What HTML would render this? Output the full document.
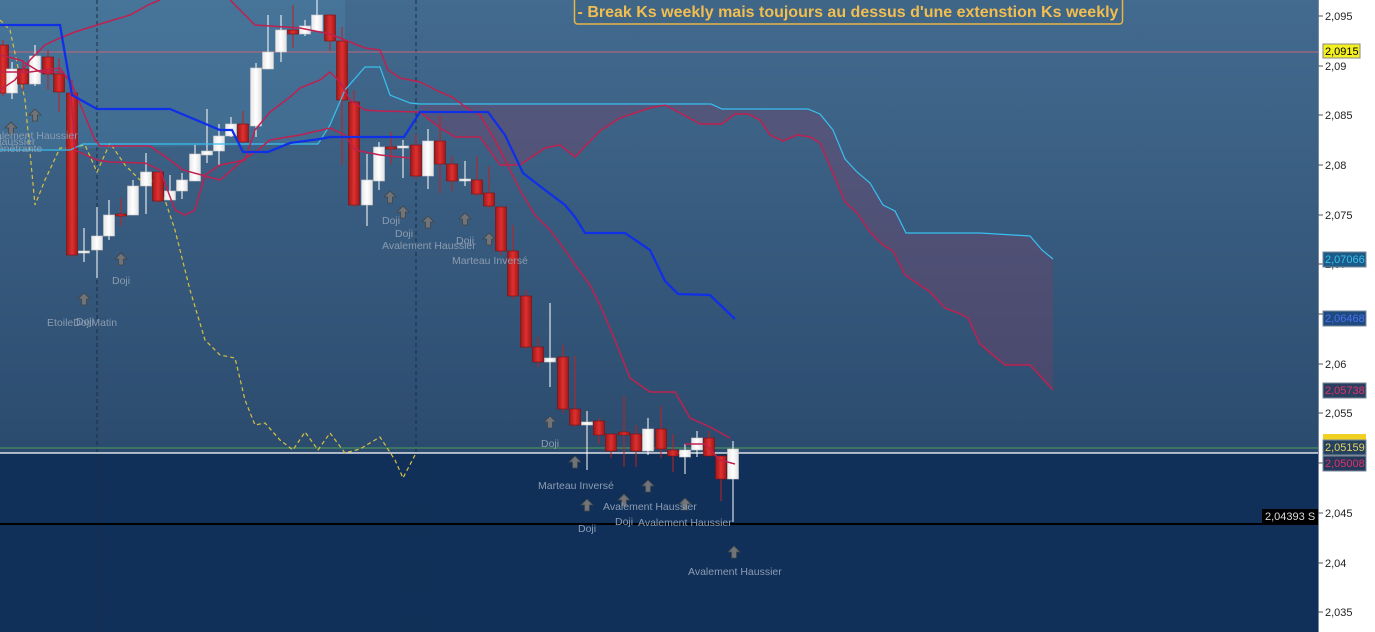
<!DOCTYPE html>
<html><head><meta charset="utf-8"><style>
html,body{margin:0;padding:0;width:1375px;height:632px;overflow:hidden;background:#fff}
svg{display:block}
text{font-family:"Liberation Sans",sans-serif}
</style></head><body>
<svg id="s" width="1375" height="632" viewBox="0 0 1375 632">
<defs>
<linearGradient id="bg" x1="0" y1="0" x2="0" y2="1"><stop offset="0" stop-color="#436b8f"/><stop offset="1" stop-color="#2b4b6e"/></linearGradient>
<linearGradient id="rb" x1="0" y1="0" x2="1" y2="0"><stop offset="0" stop-color="#a01818"/><stop offset="0.5" stop-color="#e03030"/><stop offset="1" stop-color="#a01818"/></linearGradient>
<linearGradient id="wb" x1="0" y1="0" x2="1" y2="0"><stop offset="0" stop-color="#e8e8e8"/><stop offset="0.5" stop-color="#ffffff"/><stop offset="1" stop-color="#e0e0e0"/></linearGradient>
<symbol id="ar" viewBox="0 0 14 14"><path d="M7 1 L13 7 L9.5 7 L9.5 13 L4.5 13 L4.5 7 L1 7 Z" fill="#707478" stroke="#404448" stroke-width="0.8"/></symbol>
</defs>
<rect x="0" y="0" width="1318" height="453" fill="url(#bg)"/>
<rect x="0" y="453" width="1318" height="179" fill="#10305a"/>
<rect x="1318" y="0" width="57" height="632" fill="#ffffff"/>
<polygon points="0,0 345,0 345,90 330,125 318,144 0,150" fill="rgba(100,180,220,0.14)"/>
<polygon points="420,104 700,104 711,104 722,109 808,109 820,114 833,130 845,159 857,172 870,183 883,205 895,211 906,233 980,233 1030,236 1042,250 1053,259 1053,390 1030,365 1005,365 993,355 980,344 968,318 958,313 945,308 930,292 905,275 893,251 883,245 870,232 857,213 845,202 835,178 820,143 810,137 797,135 783,141 770,135 760,120 748,114 735,114 722,124 700,124 680,113 665,105 650,108 620,118 600,131 575,157 560,145 545,148 520,165 500,165 480,137 455,137 440,128 420,112" fill="rgba(130,60,100,0.33)"/>
<line x1="97" y1="0" x2="97" y2="632" stroke="#1d2d40" stroke-dasharray="4,3"/>
<line x1="416" y1="0" x2="416" y2="632" stroke="#1d2d40" stroke-dasharray="4,3"/>
<line x1="0" y1="52" x2="1318" y2="52" stroke="#c06878" stroke-width="1"/>
<line x1="0" y1="448" x2="1318" y2="448" stroke="#3d7565" stroke-width="2"/>
<line x1="0" y1="453" x2="1318" y2="453" stroke="#ffffff" stroke-width="1.2"/>
<line x1="0" y1="524" x2="1318" y2="524" stroke="#000" stroke-width="2"/>
<polyline fill="none" stroke="#d8c040" stroke-width="1.2" stroke-dasharray="4,3" points="0,20 10,30 25,100 35,205 45,180 60,148 70,148 85,145 97,172 110,143 125,165 140,180 150,178 165,200 175,230 190,290 205,340 220,355 235,358 245,400 255,425 265,423 280,440 293,450 305,432 318,450 330,433 345,453 360,449 380,437 395,460 403,478 415,455"/>
<g id="cndl"></g>
<polyline fill="none" stroke="#38c0f0" stroke-width="1.2" points="0,150 70,150 83,144 318,144 330,125 345,90 365,67 380,67 390,95 410,103 420,104 700,104 711,104 722,109 808,109 820,114 833,130 845,159 857,172 870,183 883,205 895,211 906,233 980,233 1030,236 1042,250 1053,259"/>
<polyline fill="none" stroke="#c02050" stroke-width="1.5" points="420,112 440,128 455,137 480,137 500,165 520,165 545,148 560,145 575,157 600,131 620,118 650,108 665,105 680,113 700,124 722,124 735,114 748,114 760,120 770,135 783,141 797,135 810,137 820,143 835,178 845,202 857,213 870,232 883,245 893,251 905,275 930,292 945,308 958,313 968,318 980,344 993,355 1005,365 1030,365 1053,390"/>
<polyline fill="none" stroke="#c02050" stroke-width="1.5" points="0,90 15,80 30,60 45,45 60,38 75,32 97,25 110,21 130,15 150,4 160,0"/>
<polyline fill="none" stroke="#c02050" stroke-width="1.5" points="230,0 255,25 300,28 330,34 345,40 365,48 380,50 388,70 400,78 420,82 440,92 452,97 470,110 480,115 495,140 505,160 520,190 535,215 550,230 565,250 575,265 590,285 600,305 615,340 630,378 650,392 675,392 690,418 710,427 730,438"/>
<polyline fill="none" stroke="#c02050" stroke-width="1.5" points="0,72 30,72 60,68 70,82 75,150 97,160 110,162 145,163 160,170 175,210 185,215 195,210 205,175 220,165 245,160 255,130 270,112 290,97 300,88 320,80 330,72 340,82 350,100 365,110 380,111 420,112"/>
<polyline fill="none" stroke="#c02050" stroke-width="1.5" points="0,55 20,60 40,72 62,72 70,80 95,140 100,146 150,146 170,160 183,170 220,180 243,160 258,150 270,140 300,135 330,128 345,135 355,150 380,155 410,158"/>
<polyline fill="none" stroke="#c02050" stroke-width="1.5" points="685,444 705,444 720,460 735,464"/>
<polyline fill="none" stroke="#1030e8" stroke-width="2.3" points="0,25 60,25 72,95 97,109 170,109 220,130 232,130 243,152 268,152 290,143 320,139 330,137 404,137 420,112 488,112 505,135 523,173 545,190 565,205 575,217 585,233 625,233 650,250 665,281 678,294 710,295 735,319"/>
<rect x="574.5" y="-3" width="548" height="27" rx="3" fill="#3f6587" stroke="#e8b448" stroke-width="1.5"/>
<text x="848" y="17" text-anchor="middle" font-size="16" font-weight="bold" fill="#f3be50">- Break Ks weekly mais toujours au dessus d'une extenstion Ks weekly</text>
<g>
<use href="#ar" x="4" y="121" width="14" height="14"/><use href="#ar" x="28" y="108" width="14" height="14"/>
<use href="#ar" x="77" y="292" width="14" height="14"/><use href="#ar" x="114" y="252" width="14" height="14"/>
<use href="#ar" x="383" y="190" width="14" height="14"/><use href="#ar" x="396" y="205" width="14" height="14"/>
<use href="#ar" x="421" y="215" width="14" height="14"/><use href="#ar" x="458" y="212" width="14" height="14"/>
<use href="#ar" x="482" y="232" width="14" height="14"/><use href="#ar" x="543" y="415" width="14" height="14"/>
<use href="#ar" x="568" y="455" width="14" height="14"/><use href="#ar" x="580" y="498" width="14" height="14"/>
<use href="#ar" x="617" y="493" width="14" height="14"/><use href="#ar" x="641" y="479" width="14" height="14"/>
<use href="#ar" x="678" y="497" width="14" height="14"/><use href="#ar" x="727" y="545" width="14" height="14"/>
</g>
<g font-size="10.5" fill="#8c9cb0">
<text x="-4" y="139">alement Haussier</text><text x="-6" y="145">Haussier</text><text x="-8" y="152">pénétrante</text>
<text x="112" y="284">Doji</text>
<text x="47" y="326">EtoileDojiMatin</text><text x="76" y="325">Doji</text>
<text x="382" y="224">Doji</text><text x="395" y="237">Doji</text>
<text x="382" y="249">Avalement Haussier</text><text x="456" y="244">Doji</text>
<text x="452" y="264">Marteau Inversé</text>
<text x="541" y="447">Doji</text><text x="538" y="489">Marteau Inversé</text>
<text x="603" y="510">Avalement Haussier</text><text x="578" y="532">Doji</text>
<text x="615" y="525">Doji</text><text x="638" y="526">Avalement Haussier</text>
<text x="688" y="575">Avalement Haussier</text>
</g>
<line x1="1318.5" y1="0" x2="1318.5" y2="632" stroke="#7a8a9a"/>
<g font-size="11" fill="#222" id="ax"></g>
<rect x="1323" y="44" width="37" height="14" fill="#f4f020" stroke="#888"/><text x="1325" y="55" font-size="11" fill="#000">2,0915</text>
<rect x="1323" y="252" width="43" height="15" fill="#1c5a87" stroke="#7a8a9a"/><text x="1325" y="263" font-size="11" fill="#38c0f0">2,07066</text>
<rect x="1323" y="311" width="43" height="15" fill="#1f4a80" stroke="#7a8a9a"/><text x="1325" y="322" font-size="11" fill="#4a70f0">2,06468</text>
<rect x="1323" y="383" width="43" height="15" fill="#2a3f5f" stroke="#7a8a9a"/><text x="1325" y="394" font-size="11" fill="#e0306a">2,05738</text>
<rect x="1323" y="434" width="43" height="8" fill="#f0d020"/>
<rect x="1323" y="440" width="43" height="15" fill="#24425f" stroke="#7a8a9a"/><text x="1325" y="451" font-size="11" fill="#e8d060">2,05159</text>
<rect x="1323" y="456" width="43" height="15" fill="#24385a" stroke="#7a8a9a"/><text x="1325" y="467" font-size="11" fill="#e0306a">2,05008</text>
<rect x="1262" y="509" width="56" height="14" fill="#000"/><text x="1265" y="520" font-size="11" fill="#ddd">2,04393 S</text>
</svg>
<script>
var C=[[3,'r',45,93,40,96],[12,'w',69,93,62,99],[23,'r',69,84,60,90],[35,'w',56,84,45,86],[48,'r',57,74,50,90],[59,'r',74,92,58,112],[72,'r',93,255,80,257],[84,'w',251,253,228,262],[97,'w',236,250,207,278],[109,'w',215,236,200,240],[121,'r',214,216,198,226],[133,'w',186,215,180,214],[146,'w',172,186,153,214],[158,'r',172,201,172,203],[170,'w',191,200,175,200],[182,'w',180,191,173,199],[195,'w',154,181,145,181],[207,'w',151,155,109,163],[219,'w',136,151,124,166],[231,'w',124,136,117,137],[243,'r',124,142,111,143],[256,'w',68,126,63,137],[268,'w',52,69,15,69],[281,'w',30,52,15,62],[293,'r',30,34,5,48],[305,'w',26,34,20,36],[317,'w',15,31,0,30],[330,'r',15,41,14,51],[342,'r',41,100,27,165],[354,'r',102,205,90,207],[367,'w',180,205,154,226],[379,'w',147,181,142,190],[391,'r',147,149,132,164],[403,'w',146,148,140,178],[416,'r',145,176,134,179],[428,'w',141,176,129,189],[440,'r',141,164,116,193],[452,'r',164,181,156,191],[465,'w',179,181,161,186],[477,'r',180,194,156,196],[489,'r',193,206,166,208],[501,'r',207,251,206,255],[513,'r',251,296,225,299],[526,'r',296,347,290,349],[538,'r',347,362,337,367],[550,'w',358,362,303,387],[563,'r',357,409,345,413],[575,'r',409,425,356,427],[587,'w',422,425,411,470],[599,'r',421,435,418,444],[611,'r',434,451,434,458],[624,'r',432,435,396,467],[636,'r',434,451,425,467],[648,'w',429,451,418,455],[661,'r',429,449,406,458],[673,'r',450,456,434,472],[685,'w',450,457,444,474],[697,'w',438,450,431,457],[709,'r',438,456,431,456],[721,'r',456,479,456,501],[733,'w',449,479,441,522]];
var h='';C.forEach(function(c){var x=c[0],r=c[1]=='r';var col=r?'#c02020':'#ffffff';
h+='<line x1="'+x+'" y1="'+c[4]+'" x2="'+x+'" y2="'+c[5]+'" stroke="'+col+'" stroke-width="1"/>';
var hh=Math.max(2,c[3]-c[2]);h+='<rect x="'+(x-5.5)+'" y="'+c[2]+'" width="11" height="'+hh+'" fill="url(#'+(r?'rb':'wb')+')" stroke="'+(r?'#801010':'#ccc')+'" stroke-width="0.6"/>';});
document.getElementById('cndl').innerHTML=h;
var a='',L=[['2,095',16],['2,09',66],['2,085',115],['2,08',165],['2,075',215],['2,07',264],['2,065',314],['2,06',364],['2,055',413],['2,05',463],['2,045',513],['2,04',563],['2,035',612]];
L.forEach(function(l){a+='<line x1="1318" y1="'+l[1]+'" x2="1323" y2="'+l[1]+'" stroke="#555"/><text x="1325" y="'+(l[1]+4)+'">'+l[0]+'</text>';});
document.getElementById('ax').innerHTML=a;
</script>
</body></html>
